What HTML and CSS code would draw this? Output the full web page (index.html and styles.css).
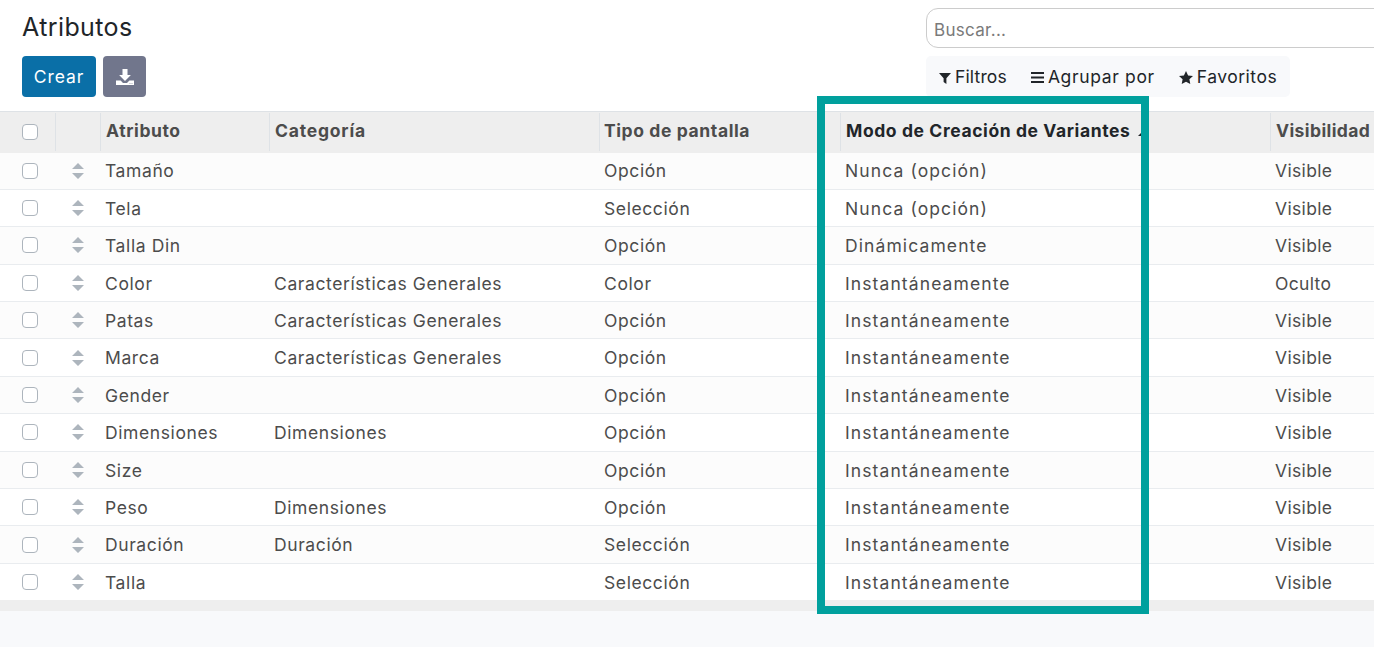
FILE: index.html
```html
<!DOCTYPE html>
<html lang="es">
<head>
<meta charset="utf-8">
<title>Atributos</title>
<link rel="stylesheet" href="styles.css">
</head>
<body>
<svg class="defs" aria-hidden="true"><symbol id="handle" viewBox="0 0 12 16"><path d="M6 0l6 6H0zM0 10h12l-6 6z"/></symbol></svg>
<div class="page">
  <header class="panel">
    <div class="panel-left">
      <h1 class="title">Atributos</h1>
      <div class="actions">
        <button class="btn btn-primary">Crear</button>
        <button class="btn btn-secondary" aria-label="Descargar">
          <svg class="dl" viewBox="0 0 18 16"><path fill-rule="evenodd" d="M6.5 0h5v6h3.4L9 12 3.1 6h3.4zM0 11.5h4.6L7 14h4l2.4-2.5H18V16H0zM13.6 14.2v.8h.8v-.8zM15.6 14.2v.8h.8v-.8z"/></svg>
        </button>
      </div>
    </div>
    <div class="panel-right">
      <div class="search"><span class="search-ph">Buscar...</span></div>
      <div class="filters">
        <span class="filter"><svg class="ic ic-funnel" viewBox="0 0 12 12"><path d="M0 1h12L7.4 6.3V12L4.6 10V6.3z"/></svg>Filtros</span>
        <span class="filter filter-group"><svg class="ic ic-bars" viewBox="0 0 13 11"><path d="M0 0h13v2H0zM0 4.5h13v2H0zM0 9h13v2H0z"/></svg>Agrupar por</span>
        <span class="filter filter-fav"><svg class="ic ic-star" viewBox="0 0 14 13"><path d="M7 0l2.1 4.4 4.9.6-3.6 3.3.9 4.7L7 10.7 2.7 13l.9-4.7L0 5l4.9-.6z"/></svg>Favoritos</span>
      </div>
    </div>
  </header>
  <main class="list">
    <table class="table">
      <colgroup><col class="c-check"><col class="c-handle"><col class="c-name"><col class="c-cat"><col class="c-type"><col class="c-mode"><col class="c-vis"></colgroup>
      <thead>
        <tr>
          <th><input class="check" type="checkbox"></th>
          <th></th>
          <th>Atributo</th>
          <th class="th-cat">Categoría</th>
          <th>Tipo de pantalla</th>
          <th class="sorted">Modo de Creación de Variantes<span class="caret"></span></th>
          <th class="th-vis">Visibilidad</th>
        </tr>
      </thead>
      <tbody>
        <tr><td><input class="check" type="checkbox"></td><td><svg class="handle"><use href="#handle"/></svg></td><td>Tamaño</td><td></td><td>Opción</td><td>Nunca (opción)</td><td>Visible</td></tr>
        <tr><td><input class="check" type="checkbox"></td><td><svg class="handle"><use href="#handle"/></svg></td><td>Tela</td><td></td><td>Selección</td><td>Nunca (opción)</td><td>Visible</td></tr>
        <tr><td><input class="check" type="checkbox"></td><td><svg class="handle"><use href="#handle"/></svg></td><td>Talla Din</td><td></td><td>Opción</td><td>Dinámicamente</td><td>Visible</td></tr>
        <tr><td><input class="check" type="checkbox"></td><td><svg class="handle"><use href="#handle"/></svg></td><td>Color</td><td>Características Generales</td><td>Color</td><td>Instantáneamente</td><td>Oculto</td></tr>
        <tr><td><input class="check" type="checkbox"></td><td><svg class="handle"><use href="#handle"/></svg></td><td>Patas</td><td>Características Generales</td><td>Opción</td><td>Instantáneamente</td><td>Visible</td></tr>
        <tr><td><input class="check" type="checkbox"></td><td><svg class="handle"><use href="#handle"/></svg></td><td>Marca</td><td>Características Generales</td><td>Opción</td><td>Instantáneamente</td><td>Visible</td></tr>
        <tr><td><input class="check" type="checkbox"></td><td><svg class="handle"><use href="#handle"/></svg></td><td>Gender</td><td></td><td>Opción</td><td>Instantáneamente</td><td>Visible</td></tr>
        <tr><td><input class="check" type="checkbox"></td><td><svg class="handle"><use href="#handle"/></svg></td><td>Dimensiones</td><td>Dimensiones</td><td>Opción</td><td>Instantáneamente</td><td>Visible</td></tr>
        <tr><td><input class="check" type="checkbox"></td><td><svg class="handle"><use href="#handle"/></svg></td><td>Size</td><td></td><td>Opción</td><td>Instantáneamente</td><td>Visible</td></tr>
        <tr><td><input class="check" type="checkbox"></td><td><svg class="handle"><use href="#handle"/></svg></td><td>Peso</td><td>Dimensiones</td><td>Opción</td><td>Instantáneamente</td><td>Visible</td></tr>
        <tr><td><input class="check" type="checkbox"></td><td><svg class="handle"><use href="#handle"/></svg></td><td>Duración</td><td>Duración</td><td>Selección</td><td>Instantáneamente</td><td>Visible</td></tr>
        <tr><td><input class="check" type="checkbox"></td><td><svg class="handle"><use href="#handle"/></svg></td><td>Talla</td><td></td><td>Selección</td><td>Instantáneamente</td><td>Visible</td></tr>
      </tbody>
    </table>
    <div class="table-foot"></div>
  </main>
  <div class="highlight"></div>
</div>
</body>
</html>
```
FILE: styles.css
```css
* { box-sizing: border-box; }
html, body { margin: 0; height: 100%; overflow: hidden; }
body {
  font-family: "Inter", "Noto Sans", sans-serif;
  font-size: 17.5px;
  letter-spacing: 0.6px;
  color: #4c4c4c;
  background: #f8f9fb;
}
.defs { position: absolute; width: 0; height: 0; }
.page { position: relative; width: 1374px; height: 647px; overflow: hidden; display: flex; flex-direction: column; }

.panel { display: flex; height: 111px; background: #fff; padding: 8px 0 0 22px; flex: none; }
.panel-left { width: 904px; flex: none; }
.title { margin: 3px 0 0; font-size: 25px; letter-spacing: 0.4px; line-height: 32px; font-weight: 400; color: #212529; height: 45px; }
.actions { display: flex; gap: 7px; }
.btn { height: 41px; border: 0; border-radius: 4px; color: #fff; font: inherit; letter-spacing: 0.9px; padding: 0; display: flex; align-items: center; justify-content: center; }
.btn-primary { width: 74px; background: #0a6fa7; }
.btn-secondary { width: 43px; background: #71768c; }
.dl { width: 18px; height: 16px; fill: #fff; }

.panel-right { flex: 1; min-width: 0; }
.search { width: 470px; height: 40px; border: 1px solid #ccc; border-radius: 12px; padding: 3px 0 0 7px; display: flex; align-items: center; background: #fff; }
.search-ph { color: #7a7a7a; font-size: 17px; letter-spacing: 0.3px; }
.filters { display: flex; width: 364px; height: 41px; margin-top: 8px; background: #f8f9fb; border-radius: 5px; padding-left: 13px; align-items: center; gap: 24px; color: #212529; letter-spacing: 0.15px; }
.filter { display: flex; align-items: center; gap: 4px; }
.filter-group { letter-spacing: 0.65px; }
.filter-fav { letter-spacing: 0.5px; }
.ic { fill: #212529; flex: none; }
.ic-funnel { width: 12px; height: 12px; margin-top: 2px; }
.ic-bars { width: 13px; height: 11px; margin-top: 2px; }
.ic-star { width: 14px; height: 13px; margin-top: 2px; }

.list { flex: none; }
.table { width: 1500px; table-layout: fixed; border-collapse: separate; border-spacing: 0; }
.c-check { width: 55px; }
.c-handle { width: 45px; }
.c-name { width: 169px; }
.c-cat { width: 330px; }
.c-type { width: 241px; }
.c-mode { width: 430px; }
.c-vis { width: 230px; }

th { height: 41.5px; background: #eee; border-top: 1px solid #dee2e6; padding: 0 0 4px 6px; text-align: left; font-weight: 700; color: #4c4c4c; white-space: nowrap; position: relative; }
th + th::before { content: ""; position: absolute; left: 0; top: 1px; bottom: 2px; width: 1px; background: #dee2e6; }
th.sorted { color: #212529; }
th.th-cat { letter-spacing: 0.8px; }
th.th-vis { letter-spacing: 0.4px; }
th:nth-child(5) { padding-left: 5px; }
th:first-child, td:first-child { padding-left: 22px; }
th:first-child { padding-bottom: 0; }
td { height: 37.4px; padding: 0.6px 0 0 5px; border-bottom: 1px solid #e9ecef; background: #fff; white-space: nowrap; }
tbody tr:nth-child(odd) td { background: #fcfcfc; }
tbody tr:last-child td { border-bottom: 0; height: 36.4px; }
td:first-child, td:nth-child(2) { padding-top: 0; padding-bottom: 0.2px; }
td:nth-child(2) { padding-left: 17px; }
td:nth-child(6) { letter-spacing: 1.1px; }
td:nth-child(7) { letter-spacing: 0.35px; }
.check { appearance: none; display: block; width: 16px; height: 16px; margin: 0; background: #fff; border: 1px solid #adb5bd; border-radius: 4px; }
.handle { display: block; width: 12px; height: 16px; fill: #adb5bd; }
.caret { display: inline-block; width: 0; height: 0; margin-left: 8px; vertical-align: 1px; border-left: 4px solid transparent; border-right: 4px solid transparent; border-bottom: 4px solid #212529; }
.table-foot { height: 11px; background: #eee; }

.highlight { position: absolute; left: 817px; top: 96px; width: 332px; height: 518px; border: 8px solid #00a09d; pointer-events: none; }
```
